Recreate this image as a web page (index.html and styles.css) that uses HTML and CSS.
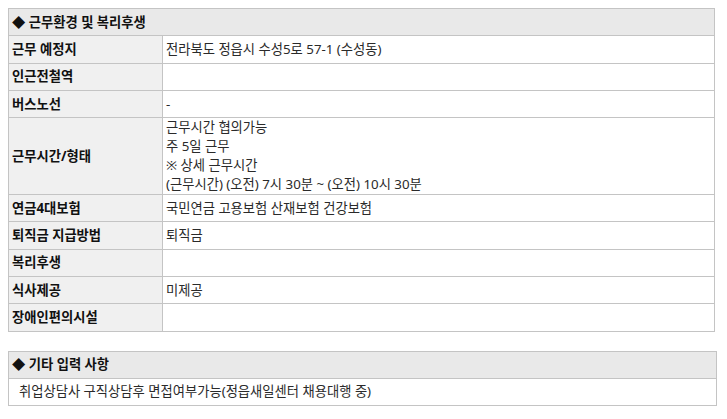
FILE: index.html
```html
<!DOCTYPE html>
<html lang="ko">
<head>
<meta charset="utf-8">
<link rel="stylesheet" href="styles.css">
</head>
<body>
<table class="info">
  <colgroup><col class="c-label"><col></colgroup>
  <tr><th colspan="2" class="sec">◆ 근무환경 및 복리후생</th></tr>
  <tr><th>근무 예정지</th><td>전라북도 정읍시 수성5로 57-1 (수성동)</td></tr>
  <tr><th>인근전철역</th><td></td></tr>
  <tr><th>버스노선</th><td>-</td></tr>
  <tr><th>근무시간/형태</th><td>근무시간 협의가능<br>주 5일 근무<br>※ 상세 근무시간<br>(근무시간) (오전) 7시 30분 ~ (오전) 10시 30분</td></tr>
  <tr><th>연금4대보험</th><td>국민연금 고용보험 산재보험 건강보험</td></tr>
  <tr><th>퇴직금 지급방법</th><td>퇴직금</td></tr>
  <tr><th>복리후생</th><td></td></tr>
  <tr><th>식사제공</th><td>미제공</td></tr>
  <tr><th>장애인편의시설</th><td></td></tr>
</table>
<table class="info etc">
  <tr><th class="sec">◆ 기타 입력 사항</th></tr>
  <tr><td class="note">취업상담사 구직상담후 면접여부가능(정읍새일센터 채용대행 중)</td></tr>
</table>
</body>
</html>
```
FILE: styles.css
```css
body {
  margin: 8px;
  font-family: "Noto Sans", "Noto Sans CJK KR", sans-serif;
  font-size: 13.3px;
  color: #222;
  background: #fff;
}
.info {
  border-collapse: collapse;
  table-layout: fixed;
  width: 707px;
}
.info.etc {
  width: 709px;
  margin-top: 19px;
}
.c-label { width: 154px; }
.info th,
.info td {
  border: 1px solid #c4c4c4;
  padding: 0 3px;
  line-height: 19px;
  height: 26.3px;
  text-align: left;
  vertical-align: middle;
}
.info.etc th,
.info.etc td {
  height: 26px;
}
.info th {
  background: #f0f0f0;
  font-weight: bold;
  color: #111;
}
.info th.sec {
  background: #e9e9e9;
}
.info td {
  color: #2a2a2a;
}
.info td.note {
  padding-left: 10px;
}
```
